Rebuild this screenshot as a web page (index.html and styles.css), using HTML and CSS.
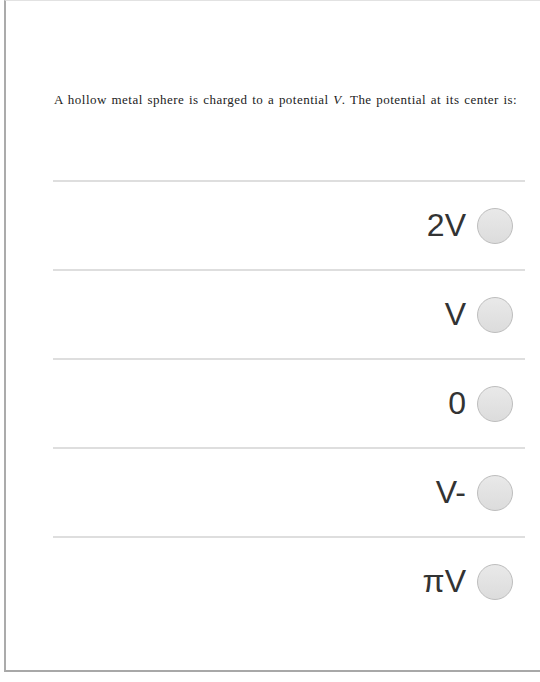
FILE: index.html
```html
<!DOCTYPE html>
<html>
<head>
<meta charset="utf-8">
<link rel="stylesheet" href="styles.css">
</head>
<body>
<div class="card">
  <p class="question">A hollow metal sphere is charged to a potential <i>V</i>. The potential at its center is:</p>
  <ul class="options">
    <li class="option"><span class="label">2V</span><span class="radio"></span></li>
    <li class="option"><span class="label">V</span><span class="radio"></span></li>
    <li class="option"><span class="label">0</span><span class="radio"></span></li>
    <li class="option"><span class="label">V-</span><span class="radio"></span></li>
    <li class="option"><span class="label">πV</span><span class="radio"></span></li>
  </ul>
</div>
</body>
</html>
```
FILE: styles.css
```css
html, body {
  margin: 0;
  padding: 0;
  background: #fff;
}
.card {
  margin-left: 4px;
  width: 560px;
  height: 672px;
  border-top: 1px solid #e2e2e2;
  border-left: 2px solid #ababab;
  border-bottom: 2px solid #a8a8a8;
  box-sizing: border-box;
}
.question {
  margin: 0;
  padding: 91px 0 0 48px;
  font-family: "Liberation Serif", serif;
  font-size: 13px;
  color: #222;
  line-height: 16px;
  letter-spacing: 0.47px;
  word-spacing: 1px;
}
.options {
  list-style: none;
  margin: 72px 0 0 47px;
  padding: 0;
  width: 472px;
}
.option {
  height: 87px;
  border-top: 2px solid #dedede;
  display: flex;
  align-items: center;
  justify-content: flex-end;
  padding-right: 12px;
  gap: 11px;
}
.label {
  font-family: "Liberation Sans", sans-serif;
  font-size: 32px;
  color: #333;
  line-height: 1;
  margin-top: -2px;
}
.radio {
  width: 34px;
  height: 34px;
  border-radius: 50%;
  border: 1px solid #bdbdbd;
  background: linear-gradient(#e9e9e9, #dcdcdc);
}
```
